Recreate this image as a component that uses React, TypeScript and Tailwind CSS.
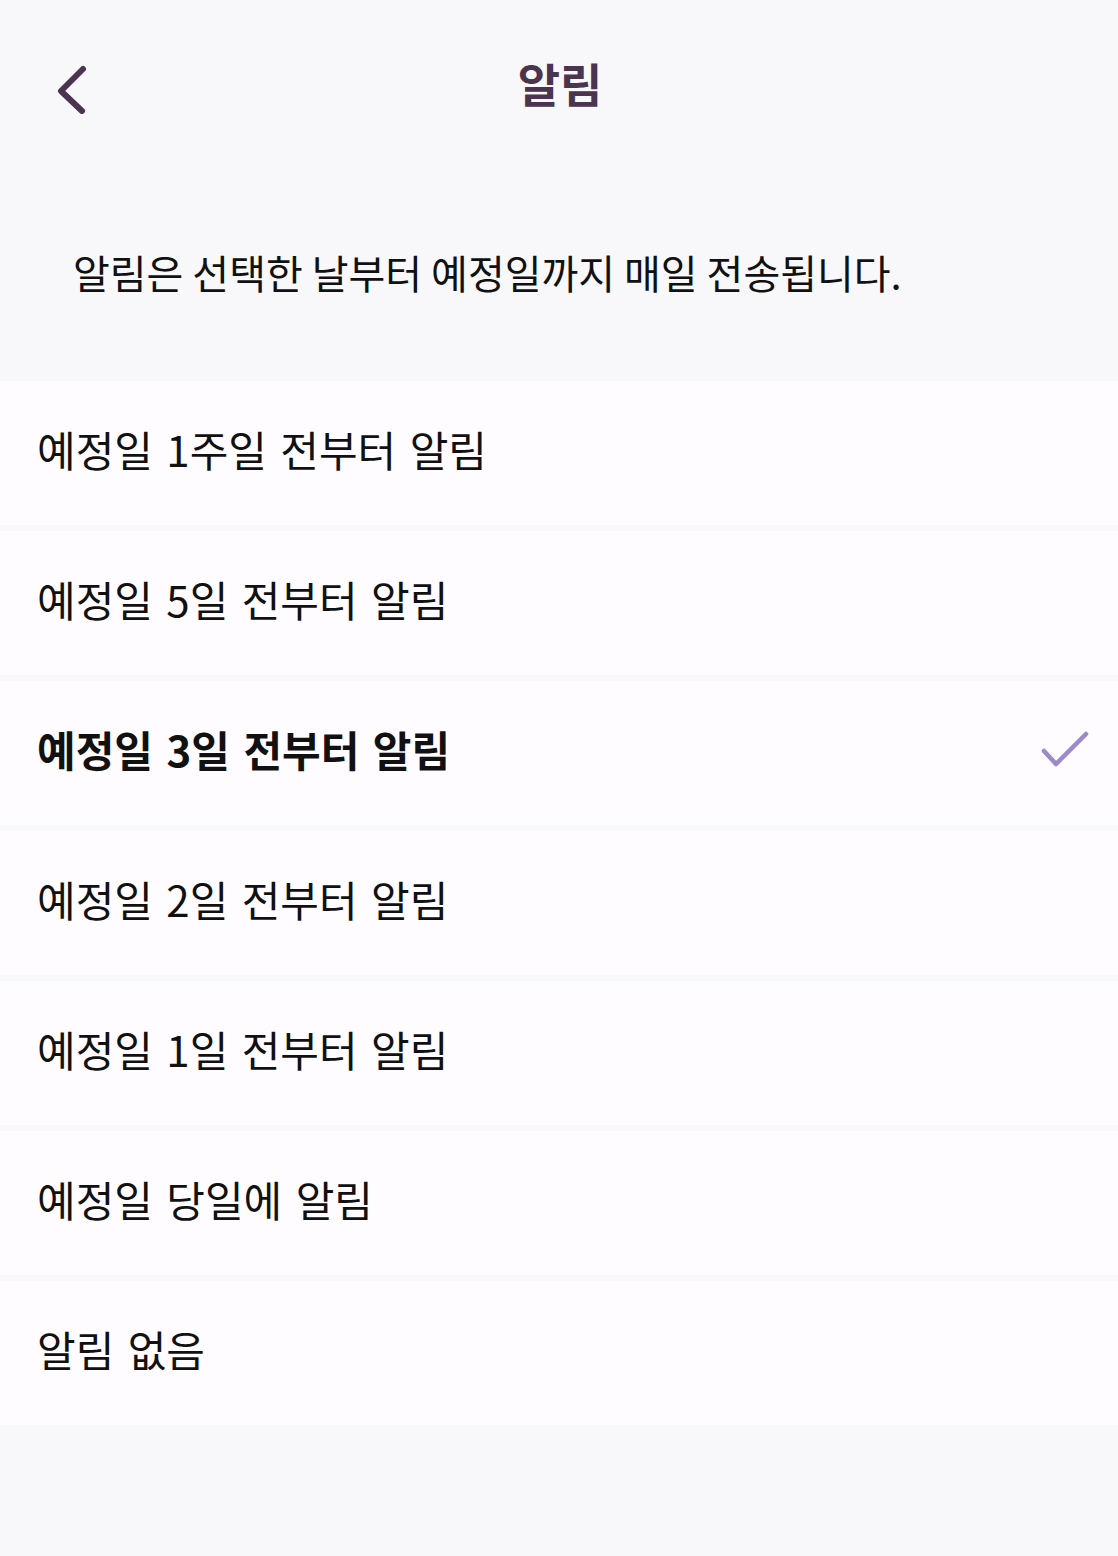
import { useState } from 'react';

const options = [
  '예정일 1주일 전부터 알림',
  '예정일 5일 전부터 알림',
  '예정일 3일 전부터 알림',
  '예정일 2일 전부터 알림',
  '예정일 1일 전부터 알림',
  '예정일 당일에 알림',
  '알림 없음',
];

export default function App() {
  const [selected, setSelected] = useState(2);

  return (
    <div
      className="min-h-[1556px] w-full bg-[#f8f7f9] text-[#111111]"
      style={{ fontFamily: '"Noto Sans CJK KR", "Noto Sans", sans-serif' }}
    >
      {/* Header */}
      <header className="relative flex h-[170px] items-start justify-center pt-[50px]">
        <button className="absolute left-[50px] top-[60px] flex h-[56px] w-[40px] items-center justify-center">
          <svg width="40" height="52" viewBox="0 0 40 52" fill="none">
            <path
              d="M33 7 L11 29 L32 49"
              stroke="#4a3450"
              strokeWidth="6"
              strokeLinecap="round"
              strokeLinejoin="round"
            />
          </svg>
        </button>
        <h1 className="ml-[2px] text-[46px] font-bold leading-[64px] text-[#4a3450]">알림</h1>
      </header>

      {/* Description */}
      <p className="h-[211px] pl-[73px] pt-[74px] text-[40px] leading-[56px]">
        알림은 선택한 날부터 예정일까지 매일 전송됩니다.
      </p>

      {/* Options */}
      <ul className="flex flex-col gap-[6px]">
        {options.map((label, i) => (
          <li key={label}>
            <button
              onClick={() => setSelected(i)}
              className="flex h-[144px] w-full items-center justify-between bg-[#fffcff] pb-[8px] pl-[37px] pr-[28px] text-left"
            >
              <span
                className={`text-[42px] leading-[48px] [word-spacing:4px] ${
                  selected === i ? 'font-bold' : 'font-normal'
                }`}
              >
                {label}
              </span>
              {selected === i && (
                <svg width="50" height="42" viewBox="0 0 50 42" fill="none" className="mt-[2px]">
                  <path
                    d="M4 22 L16 35 L46 5"
                    stroke="#9b89c9"
                    strokeWidth="4.5"
                    strokeLinecap="round"
                    strokeLinejoin="round"
                  />
                </svg>
              )}
            </button>
          </li>
        ))}
      </ul>
    </div>
  );
}
